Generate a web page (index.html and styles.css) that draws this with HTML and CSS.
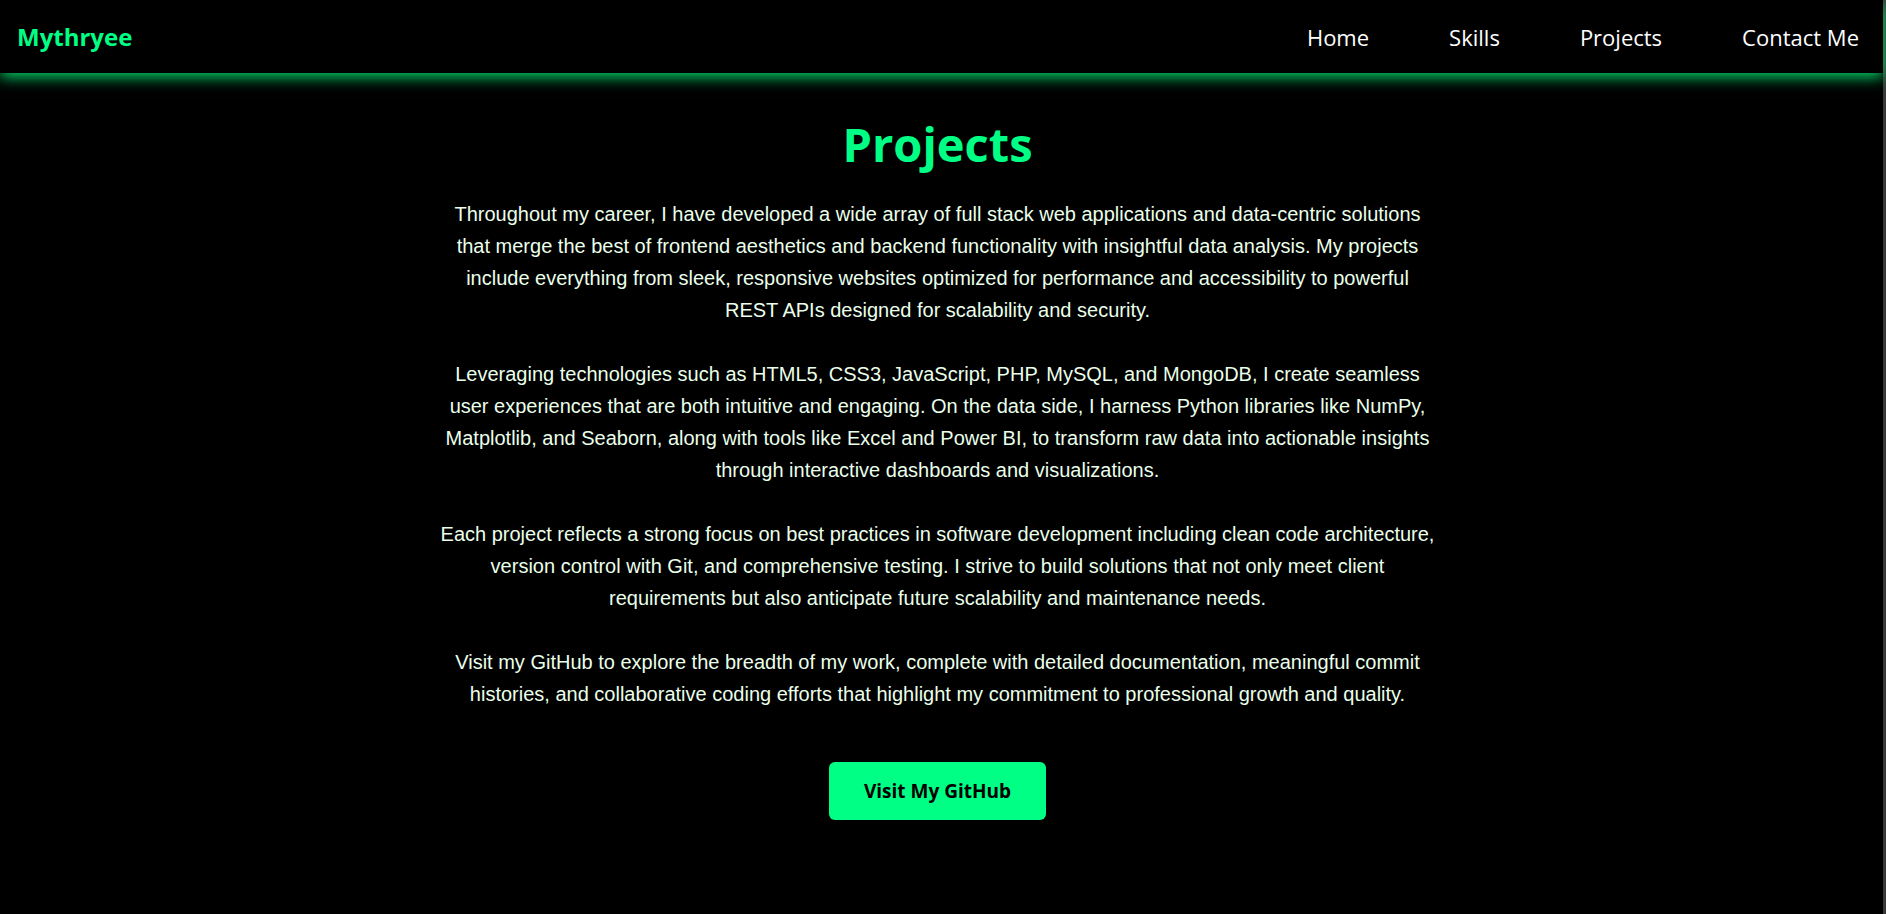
FILE: index.html
```html
<!DOCTYPE html>
<html lang="en">
<head>
<meta charset="utf-8">
<title>Mythryee - Projects</title>
<link rel="stylesheet" href="styles.css">
</head>
<body>
<div class="page">
  <header class="topbar">
    <div class="logo">Mythryee</div>
    <nav class="nav">
      <a href="#home">Home</a>
      <a href="#skills">Skills</a>
      <a href="#projects">Projects</a>
      <a href="#contact">Contact Me</a>
    </nav>
  </header>
  <main class="projects">
    <h2 class="title">Projects</h2>
    <p class="intro">Throughout my career, I have developed a wide array of full stack web applications and data-centric solutions that merge the best of frontend aesthetics and backend functionality with insightful data analysis. My projects include everything from sleek, responsive websites optimized for performance and accessibility to powerful REST APIs designed for scalability and security.<br><br>Leveraging technologies such as HTML5, CSS3, JavaScript, PHP, MySQL, and MongoDB, I create seamless user experiences that are both intuitive and engaging. On the data side, I harness Python libraries like NumPy, Matplotlib, and Seaborn, along with tools like Excel and Power BI, to transform raw data into actionable insights through interactive dashboards and visualizations.<br><br>Each project reflects a strong focus on best practices in software development including clean code architecture, version control with Git, and comprehensive testing. I strive to build solutions that not only meet client requirements but also anticipate future scalability and maintenance needs.<br><br>Visit my GitHub to explore the breadth of my work, complete with detailed documentation, meaningful commit histories, and collaborative coding efforts that highlight my commitment to professional growth and quality.</p>
    <a class="btn" href="#github">Visit My GitHub</a>
  </main>
</div>
</body>
</html>
```
FILE: styles.css
```css
* { box-sizing: border-box; }
html, body {
  margin: 0;
  padding: 0;
  background: #000;
}
body {
  font-family: "Liberation Sans", Arial, sans-serif;
}
.page {
  min-height: 100vh;
  border-right: 3px solid #3a3a3a;
  background: #000;
}
.topbar {
  height: 73px;
  display: flex;
  align-items: center;
  justify-content: space-between;
  padding: 0 24px 0 17px;
  background: #000;
  box-shadow: 0 4px 14px #00d86a;
  position: relative;
  z-index: 1;
}
.logo {
  font-family: "Comic Sans MS", "Open Sans", sans-serif;
  font-weight: 700;
  font-size: 24px;
  color: #00ff85;
}
.nav {
  display: flex;
  gap: 80px;
}
.nav a {
  font-family: "Comic Sans MS", "Open Sans", sans-serif;
  font-size: 22px;
  color: #fff;
  text-decoration: none;
}
.projects {
  display: flex;
  flex-direction: column;
  align-items: center;
  padding: 41px 8px 0 0;
}
.title {
  margin: 0;
  font-family: "Comic Sans MS", "Open Sans", sans-serif;
  font-weight: 700;
  font-size: 47px;
  line-height: 60px;
  color: #00ff85;
}
.intro {
  margin: 24px 0 0;
  max-width: 1000px;
  text-align: center;
  font-size: 20px;
  line-height: 1.6;
  color: #eaffea;
}
.btn {
  margin-top: 52px;
  width: 217px;
  height: 58px;
  display: flex;
  align-items: center;
  justify-content: center;
  background: #00ff85;
  color: #000;
  border-radius: 6px;
  text-decoration: none;
  font-family: "Comic Sans MS", "Open Sans", sans-serif;
  font-weight: 700;
  font-size: 19px;
}
```
